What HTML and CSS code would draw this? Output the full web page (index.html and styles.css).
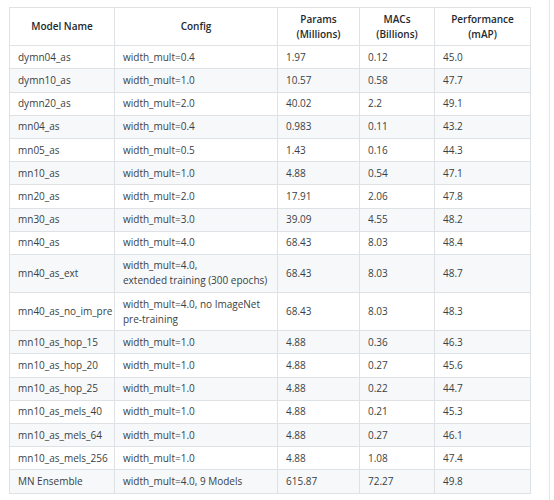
FILE: index.html
```html
<!DOCTYPE html>
<html>
<head>
<meta charset="utf-8">
<link rel="stylesheet" href="styles.css">
</head>
<body>
<div class="page">
  <div class="content">
    <table class="models">
      <colgroup>
        <col class="c-name"><col class="c-config"><col class="c-params"><col class="c-macs"><col class="c-perf">
      </colgroup>
      <thead>
        <tr><th>Model Name</th><th>Config</th><th>Params<br>(Millions)</th><th>MACs<br>(Billions)</th><th>Performance<br>(mAP)</th></tr>
      </thead>
      <tbody>
        <tr><td>dymn04_as</td><td>width_mult=0.4</td><td>1.97</td><td>0.12</td><td>45.0</td></tr>
        <tr><td>dymn10_as</td><td>width_mult=1.0</td><td>10.57</td><td>0.58</td><td>47.7</td></tr>
        <tr><td>dymn20_as</td><td>width_mult=2.0</td><td>40.02</td><td>2.2</td><td>49.1</td></tr>
        <tr><td>mn04_as</td><td>width_mult=0.4</td><td>0.983</td><td>0.11</td><td>43.2</td></tr>
        <tr><td>mn05_as</td><td>width_mult=0.5</td><td>1.43</td><td>0.16</td><td>44.3</td></tr>
        <tr><td>mn10_as</td><td>width_mult=1.0</td><td>4.88</td><td>0.54</td><td>47.1</td></tr>
        <tr><td>mn20_as</td><td>width_mult=2.0</td><td>17.91</td><td>2.06</td><td>47.8</td></tr>
        <tr><td>mn30_as</td><td>width_mult=3.0</td><td>39.09</td><td>4.55</td><td>48.2</td></tr>
        <tr><td>mn40_as</td><td>width_mult=4.0</td><td>68.43</td><td>8.03</td><td>48.4</td></tr>
        <tr><td>mn40_as_ext</td><td>width_mult=4.0,<br>extended training (300 epochs)</td><td>68.43</td><td>8.03</td><td>48.7</td></tr>
        <tr><td>mn40_as_no_im_pre</td><td>width_mult=4.0, no ImageNet pre-training</td><td>68.43</td><td>8.03</td><td>48.3</td></tr>
        <tr><td>mn10_as_hop_15</td><td>width_mult=1.0</td><td>4.88</td><td>0.36</td><td>46.3</td></tr>
        <tr><td>mn10_as_hop_20</td><td>width_mult=1.0</td><td>4.88</td><td>0.27</td><td>45.6</td></tr>
        <tr><td>mn10_as_hop_25</td><td>width_mult=1.0</td><td>4.88</td><td>0.22</td><td>44.7</td></tr>
        <tr><td>mn10_as_mels_40</td><td>width_mult=1.0</td><td>4.88</td><td>0.21</td><td>45.3</td></tr>
        <tr><td>mn10_as_mels_64</td><td>width_mult=1.0</td><td>4.88</td><td>0.27</td><td>46.1</td></tr>
        <tr><td>mn10_as_mels_256</td><td>width_mult=1.0</td><td>4.88</td><td>1.08</td><td>47.4</td></tr>
        <tr><td>MN Ensemble</td><td>width_mult=4.0, 9 Models</td><td>615.87</td><td>72.27</td><td>49.8</td></tr>
      </tbody>
    </table>
  </div>
</div>
</body>
</html>
```
FILE: styles.css
```css
html, body {
  margin: 0;
  padding: 0;
  background: #ffffff;
}
.page {
  width: 550px;
  height: 500px;
  border-right: 1px solid #e4e6e8;
  box-sizing: border-box;
  overflow: hidden;
}
.content {
  padding: 7px 0 0 9px;
}
.models {
  border-collapse: collapse;
  table-layout: fixed;
  width: 521px;
  font-family: "Open Sans", "Noto Sans", sans-serif;
  font-size: 10px;
  line-height: 15px;
  color: #3a3f44;
}
.c-name { width: 105px; }
.c-config { width: 163px; }
.c-params { width: 82px; }
.c-macs { width: 75px; }
.c-perf { width: 96px; }
.models th,
.models td {
  border: 1px solid #dfe2e5;
  padding: 3.6px 8px;
  text-align: left;
  vertical-align: middle;
  font-weight: 400;
}
.models th {
  text-align: center;
  font-weight: 600;
  color: #24292e;
}
.models tbody tr:nth-child(even) {
  background: #f6f8fa;
}
```
